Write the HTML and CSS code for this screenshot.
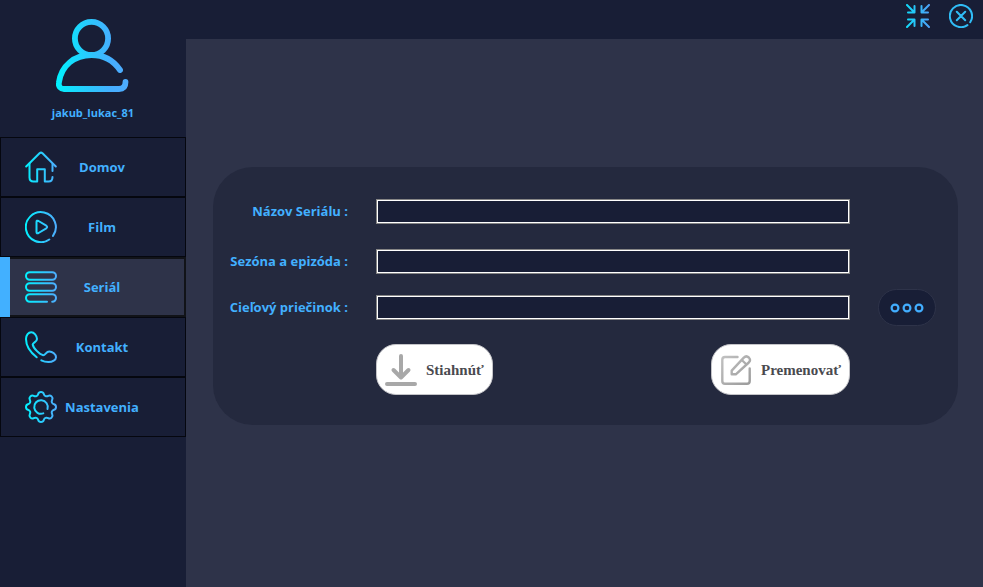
FILE: index.html
```html
<!DOCTYPE html>
<html lang="sk">
<head>
<meta charset="utf-8">
<title>Seriál</title>
<link rel="stylesheet" href="styles.css">
</head>
<body>
<svg class="defs" aria-hidden="true">
  <defs>
    <linearGradient id="g74" gradientUnits="userSpaceOnUse" x1="0" y1="37" x2="74" y2="37"><stop offset="0" stop-color="#00f2fe"/><stop offset="0.5" stop-color="#2fc3fd"/><stop offset="0.75" stop-color="#46aeff"/><stop offset="1" stop-color="#4facfe"/></linearGradient>
    <linearGradient id="g32" gradientUnits="userSpaceOnUse" x1="0" y1="16" x2="32" y2="16"><stop offset="0" stop-color="#00f2fe"/><stop offset="1" stop-color="#4facfe"/></linearGradient>
    <linearGradient id="g0" gradientUnits="userSpaceOnUse" x1="-16" y1="0" x2="16" y2="0"><stop offset="0" stop-color="#00f2fe"/><stop offset="1" stop-color="#4facfe"/></linearGradient>
    <linearGradient id="g24" gradientUnits="userSpaceOnUse" x1="0" y1="12" x2="24" y2="12"><stop offset="0" stop-color="#10dcfa"/><stop offset="1" stop-color="#4f9ff8"/></linearGradient>
    <linearGradient id="gray" gradientUnits="userSpaceOnUse" x1="0" y1="0" x2="32" y2="32"><stop offset="0" stop-color="#c4c4c4"/><stop offset="1" stop-color="#999"/></linearGradient>
  </defs>
</svg>
<div class="app">
  <aside class="sidebar">
    <div class="user">
      <svg class="avatar" viewBox="0 0 74 74" aria-hidden="true"><g fill="none" stroke="url(#g74)" stroke-width="5.8" stroke-linecap="round" stroke-linejoin="round"><circle cx="35.500" cy="20.500" r="16.600"/><path d="M64 52C57.500 42.500 47.500 37 35.500 37C18.500 37 5.300 47.500 2.900 64.500C2.200 68.500 4.500 71 8 71H63Q69.500 71 69.500 64"/></g></svg>
      <span class="user-name">jakub_lukac_81</span>
    </div>
    <nav class="menu">
      <a class="item" href="#domov">
        <svg class="icon" viewBox="0 0 32 32" aria-hidden="true"><g class="line"><path d="M1.200 15.500L14.500 2.200Q16 1 17.500 2.200L30.800 15.500"/><path d="M4.500 12.500V26.500Q4.500 30.500 8.500 30.500H12.200V18.200H19.800V30.500H23.500Q27.500 30.500 27.500 26"/><path d="M27.500 13V20"/></g></svg>
        <span class="label">Domov</span>
      </a>
      <a class="item" href="#film">
        <svg class="icon" viewBox="0 0 32 32" aria-hidden="true"><g class="line"><path d="M28 24.900A15 15 0 1 0 24.300 28.500"/><path d="M11.500 11Q11.500 9 13.500 10L21.300 14.700Q23 16 21.300 17.300L13.500 22Q11.500 23 11.500 21Z"/></g></svg>
        <span class="label">Film</span>
      </a>
      <a class="item active" href="#serial" aria-current="page">
        <svg class="icon" viewBox="0 0 32 32" aria-hidden="true"><g class="line"><rect x="1" y="1.200" width="30" height="7.600" rx="3.800"/><rect x="1" y="12.200" width="30" height="7.600" rx="3.800"/><path d="M22 30.800H4.800A3.800 3.800 0 0 1 4.800 23.200H27.200A3.800 3.800 0 0 1 27.200 30.800"/></g></svg>
        <span class="label">Seriál</span>
      </a>
      <a class="item" href="#kontakt">
        <svg class="icon" viewBox="0 0 32 32" aria-hidden="true"><g class="line"><path d="M11.700 26.300C5 21 1 14.500 1 8C1 4 3.500 1.200 6.200 1.200C9 1.200 12 4.500 12 8C12 11 8 11.500 7.700 13.500C8.200 17 14.500 23.500 18.200 24.200C20.500 24.200 21 20.500 24.300 20.500C27.500 20.500 31 23.500 31 26.200C31 29 27.500 31 23.500 31Q19.500 31 16.300 29.300"/></g></svg>
        <span class="label">Kontakt</span>
      </a>
      <a class="item" href="#nastavenia">
        <svg class="icon" viewBox="-16 -16 32 32" aria-hidden="true"><g class="line gear"><path d="M0-15C4-15 1.700-12 4.500-10.900C7.300-9.700 7.800-13.400 10.600-10.600C13.400-7.800 9.700-7.300 10.900-4.500C12-1.700 15-4 15 0C15 4 12 1.700 10.900 4.500C9.700 7.300 13.400 7.800 10.600 10.600C7.800 13.400 7.300 9.700 4.500 10.900C1.700 12 4 15 0 15C-4 15-1.700 12-4.500 10.900C-7.300 9.700-7.800 13.400-10.600 10.600C-13.400 7.800-9.700 7.300-10.900 4.500C-12 1.700-15 4-15 0C-15-4-12-1.700-10.900-4.500C-9.700-7.300-13.400-7.800-10.600-10.600C-7.800-13.400-7.300-9.700-4.500-10.900C-1.700-12-4-15 0-15Z"/><path d="M6.500 2A6.800 6.800 0 1 0 2.300 6.400"/></g></svg>
        <span class="label">Nastavenia</span>
      </a>
    </nav>
  </aside>
  <div class="main">
    <header class="topbar">
      <button class="window-button" type="button" aria-label="Zmenšiť"><svg viewBox="0 0 24 24" aria-hidden="true"><path fill="none" stroke="url(#g24)" stroke-width="2" stroke-linecap="round" stroke-linejoin="round" d="M1 1L8 8M8.500 2V8.500H2M23 1L16 8M15.500 2V8.500H22M1 23L8 16M2 15.500H8.500V22M23 23L16 16M22 15.500H15.500V22"/></svg></button>
      <button class="window-button" type="button" aria-label="Zavrieť"><svg viewBox="0 0 24 24" aria-hidden="true"><path fill="none" stroke="#30bdf7" stroke-width="2" stroke-linecap="round" d="M21.200 18.200A11.100 11.100 0 1 0 18.400 21.100M7.800 7.800L16.200 16.200M16.200 7.800L7.800 16.200"/></svg></button>
    </header>
    <main class="content">
      <form class="panel">
        <div class="row">
          <label for="name">Názov Seriálu :</label>
          <input id="name" type="text">
        </div>
        <div class="row">
          <label for="episode">Sezóna a epizóda :</label>
          <input id="episode" type="text">
        </div>
        <div class="row folder">
          <label for="folder">Cieľový priečinok :</label>
          <input id="folder" type="text">
          <button class="browse" type="button" aria-label="Vybrať priečinok"><svg viewBox="0 0 34 10" aria-hidden="true"><g fill="none" stroke="#42aeff" stroke-width="2.200"><circle cx="5" cy="5" r="3.400"/><circle cx="17" cy="5" r="3.400"/><circle cx="29" cy="5" r="3.400"/></g></svg></button>
        </div>
        <div class="row submit">
          <div class="actions">
            <button class="action" type="button"><svg class="icon" viewBox="0 0 32 32" aria-hidden="true"><path fill="none" stroke="#a8a8a8" stroke-width="4" stroke-linecap="round" stroke-linejoin="round" d="M16 2V23M8.500 16L16 23.500L23.500 16M2 30H30"/></svg>Stiahnúť</button>
            <button class="action" type="button"><svg class="icon" viewBox="0 0 32 32" aria-hidden="true"><g fill="none" stroke="url(#gray)" stroke-width="2.400" stroke-linecap="round" stroke-linejoin="round"><path d="M17.500 3H5Q2.300 3 2.300 5.700V27Q2.300 29.700 5 29.700H27Q29.700 29.700 29.700 27V14.500"/><path d="M11.700 20.300V16.600L23.800 3.600Q26.300 1.200 28.800 3.500Q31.200 6 28.800 8.500L15.800 20.300ZM21.800 6L26.500 10.500"/></g></svg>Premenovať</button>
          </div>
        </div>
      </form>
    </main>
  </div>
</div>
</body>
</html>
```
FILE: styles.css
```css
* {
  box-sizing: border-box;
}

body {
  margin: 0;
  background: #2e3349;
  color: #42b0ff;
  font: 670 13px/18px "Open Sans", "Noto Sans", sans-serif;
}

button {
  padding: 0;
  border: 0;
  background: none;
  cursor: pointer;
}

svg {
  display: block;
}

.defs {
  position: absolute;
  width: 0;
  height: 0;
}

.app {
  display: flex;
  min-height: 100vh;
}

.sidebar {
  flex: 0 0 186px;
  background: #181e36;
}

.user {
  display: flex;
  flex-direction: column;
  align-items: center;
  gap: 13px;
  height: 137px;
  padding-top: 18px;
}

.avatar {
  width: 74px;
  height: 74px;
}

.user-name {
  font-size: 11px;
  line-height: 16px;
}

.item {
  display: flex;
  align-items: center;
  height: 60px;
  padding-left: 24px;
  border: 1px solid #05070f;
  color: inherit;
  text-decoration: none;
}

.item.active {
  padding-left: 0;
  border-width: 2px 2px 2px 0;
  border-color: #111318;
  background: #2e3349;
}

.item.active::before {
  content: "";
  align-self: stretch;
  width: 10px;
  margin: -2px 15px -2px 0;
  background: #42b0ff;
}

.icon {
  flex: none;
  width: 32px;
  height: 32px;
}

.line {
  fill: none;
  stroke: url(#g32);
  stroke-width: 2;
  stroke-linecap: round;
  stroke-linejoin: round;
}

.gear {
  stroke: url(#g0);
}

.label {
  width: 90px;
  text-align: center;
}

.main {
  display: flex;
  flex: 1;
  flex-direction: column;
  min-width: 0;
}

.topbar {
  display: flex;
  gap: 19px;
  justify-content: flex-end;
  height: 39px;
  padding: 4px 10px;
  background: #181e36;
}

.window-button {
  width: 24px;
  height: 24px;
}

.content {
  padding: 128px 25px 0 27px;
}

.panel {
  padding: 26px 22px 30px 18px;
  border-radius: 40px;
  background: #24293e;
}

.row {
  display: grid;
  grid-template-columns: 117px 1fr 58px;
  column-gap: 28px;
  align-items: center;
  min-height: 37px;
  margin-bottom: 13px;
}

.row.folder {
  margin: -4px 0 18px;
}

.row.submit {
  margin-bottom: 0;
}

.row label {
  justify-self: end;
  padding-bottom: 1px;
  white-space: nowrap;
}

.row input {
  width: 100%;
  height: 25px;
  padding: 0 4px;
  border: 1px solid #858585;
  outline: 1px solid #fff;
  outline-offset: -2px;
  background: #181e36;
  color: inherit;
  font: inherit;
}

.browse {
  display: grid;
  place-items: center;
  height: 37px;
  border: 1px solid #2e3349;
  border-radius: 19px;
  background: #181e36;
}

.browse svg {
  width: 34px;
  height: 10px;
}

.actions {
  display: flex;
  grid-column: 2;
  justify-content: space-between;
}

.action {
  display: flex;
  gap: 9px;
  align-items: center;
  height: 51px;
  padding: 0 8px;
  border: 1px solid #c4c4c8;
  border-radius: 20px;
  background: #fff;
  color: #4a4a4f;
  font: bold 15px/18px "Liberation Serif", serif;
}
```
